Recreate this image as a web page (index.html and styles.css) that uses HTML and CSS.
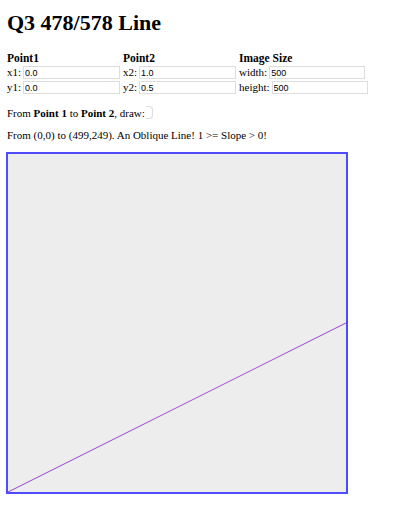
FILE: index.html
```html
<!DOCTYPE html>
<html>
<head>
<meta charset="utf-8">
<link rel="stylesheet" href="styles.css">
</head>
<body>
<h1 class="title">Q3 478/578 Line</h1>
<div class="form">
  <div class="col">
    <div class="head">Point1</div>
    <div class="row"><span class="lbl">x1:</span><input class="inp w1" value="0.0"></div>
    <div class="row"><span class="lbl">y1:</span><input class="inp w1" value="0.0"></div>
  </div>
  <div class="col">
    <div class="head">Point2</div>
    <div class="row"><span class="lbl">x2:</span><input class="inp w1" value="1.0"></div>
    <div class="row"><span class="lbl">y2:</span><input class="inp w1" value="0.5"></div>
  </div>
  <div class="col">
    <div class="head">Image Size</div>
    <div class="row"><span class="lbl">width:</span><input class="inp w2" value="500"></div>
    <div class="row"><span class="lbl">height:</span><input class="inp w2" value="500"></div>
  </div>
</div>
<p class="line1">From <b>Point 1</b> to <b>Point 2</b>, draw:<span class="check"></span></p>
<p class="line2">From (0,0) to (499,249). An Oblique Line! 1 &gt;= Slope &gt; 0!</p>
<div class="canvas">
  <svg width="338" height="338" viewBox="0 0 338 338">
    <line x1="0" y1="338" x2="338" y2="169" stroke="#a44cd0" stroke-width="1.1"/>
  </svg>
</div>
</body>
</html>
```
FILE: styles.css
```css
body {
  margin: 0;
  padding: 11px 7px 0 7px;
  font-family: "Liberation Serif", "Times New Roman", serif;
  color: #000;
  font-size: 11px;
}
.title {
  margin: 0;
  font-size: 22px;
  line-height: 24px;
  font-weight: bold;
}
.form {
  display: grid;
  grid-template-columns: 116px 116px 130px;
  margin-top: 17px;
}
.head {
  font-weight: bold;
  font-size: 11.5px;
  line-height: 13px;
}
.row {
  display: flex;
  align-items: center;
  height: 15px;
}
.lbl {
  line-height: 13px;
}
.inp {
  box-sizing: border-box;
  height: 13px;
  border: 1px solid #ddd;
  padding: 0 1px;
  margin: 0 0 0 2px;
  font-family: "Liberation Sans", Arial, sans-serif;
  font-size: 9px;
  color: #000;
  outline: none;
}
.w1 { width: 97px; }
.w2 { width: 96px; }
.line1 {
  margin: 11px 0 0 0;
  line-height: 14px;
}
.check {
  display: inline-block;
  vertical-align: -2px;
  width: 6px;
  height: 11px;
  border: 1px solid #ddd;
  border-left: none;
  border-radius: 0 4px 4px 0;
  margin-left: 1px;
}
.line2 {
  margin: 8px 0 0 0;
  line-height: 14px;
}
.canvas {
  margin-top: 10px;
  margin-left: -1px;
  width: 338px;
  height: 338px;
  border: 2px solid #4d4dff;
  background: #ededed;
}
.canvas svg { display: block; }
```
